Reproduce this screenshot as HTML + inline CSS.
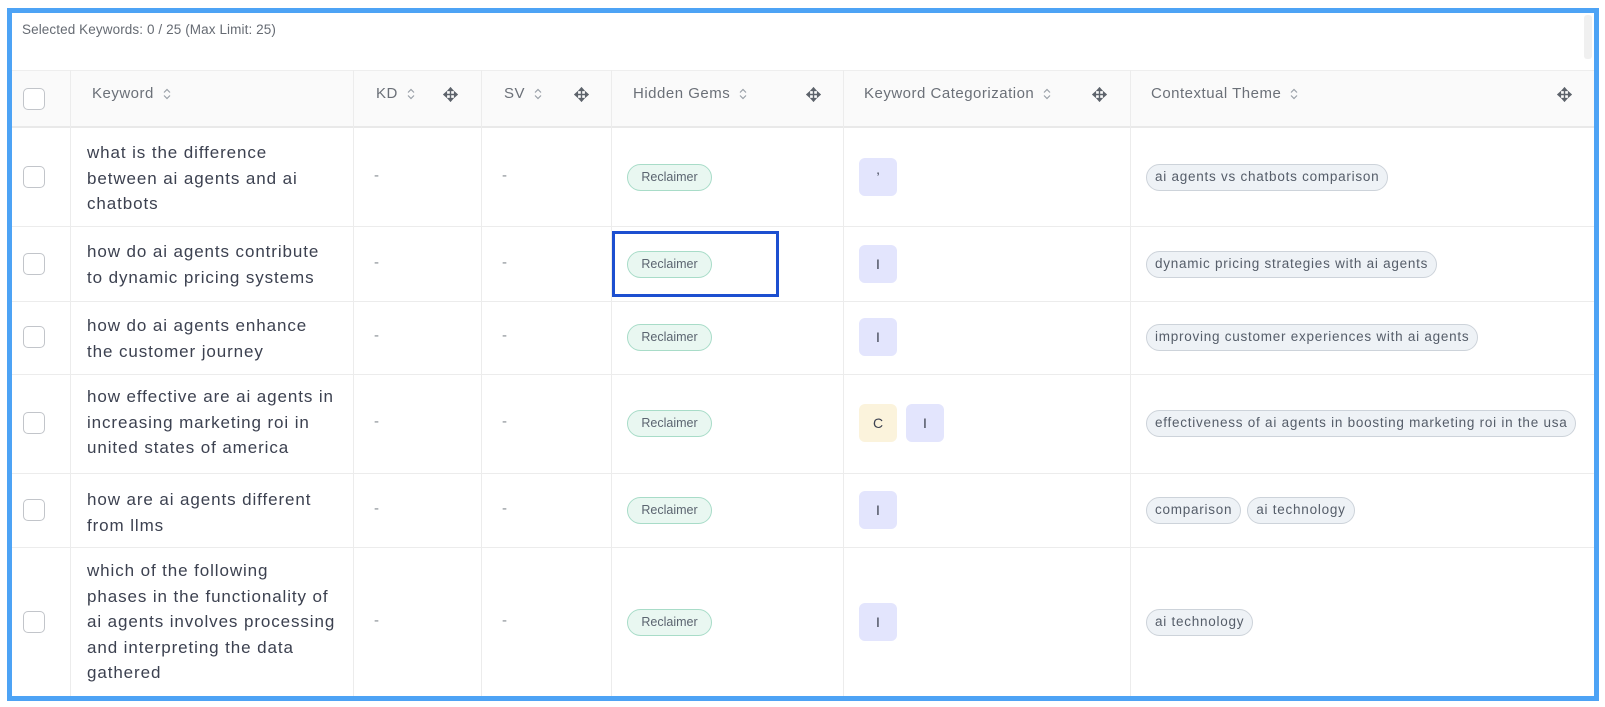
<!DOCTYPE html>
<html><head><meta charset="utf-8"><style>
*{box-sizing:border-box;margin:0;padding:0}
body{width:1605px;height:707px;background:#fff;font-family:"Liberation Sans",sans-serif;position:relative;overflow:hidden}
.frame{position:absolute;left:7px;top:8px;width:1592px;height:693px;border:5px solid #4da3f5;background:#fff;overflow:hidden}
.abs{position:absolute}
.sel{left:10px;top:9px;font-size:13.5px;color:#666b73;letter-spacing:0.1px}
.hdr{left:0;top:57px;width:1582px;height:58px;background:#fafafa;border-top:1px solid #eee;border-bottom:2px solid #e9e9e9}
.vl{position:absolute;width:1px;background:#ececec}
.hl{position:absolute;height:1px;background:#ececec;left:0;width:1582px}
.cb{position:absolute;width:22px;height:22px;border:1.5px solid #c2c5ca;border-radius:5px;background:#fff;left:11px}
.ht{position:absolute;font-size:15px;color:#6b7078;top:72px;letter-spacing:0.5px;display:flex;align-items:center}
.sort{display:inline-block;margin-left:9px;width:8px;height:12px}
.mv{position:absolute;top:74px;width:15px;height:15px}
.kw{position:absolute;left:75px;font-size:17px;line-height:25.5px;color:#3c4150;white-space:nowrap;letter-spacing:0.9px}
.dash{position:absolute;font-size:15px;color:#8a8f96}
.rec{position:absolute;left:615px;height:27px;width:85px;border:1.5px solid #a8dcc8;background:#e9f7f1;border-radius:14px;font-size:12.5px;color:#5b6470;text-align:center;line-height:24px}
.cat{position:absolute;width:38px;height:38px;border-radius:6px;background:#e3e5fd;color:#3c4150;font-size:14px;text-align:center;line-height:38px}
.cat.c{background:#fbf3dc}
.thw{position:absolute;left:1134px;display:flex;gap:6px}
.th{height:27px;border:1.5px solid #cdd3da;background:#eef2f6;border-radius:14px;font-size:13.5px;color:#555d69;padding:0 8px;line-height:24px;white-space:nowrap;letter-spacing:0.75px}
</style></head><body>
<div class="frame">
<div class="abs sel">Selected Keywords: 0 / 25 (Max Limit: 25)</div>
<div style="position:absolute;right:2px;top:2px;width:8px;height:44px;background:#f0f0f0;border-radius:3px"></div>
<div class="abs hdr"></div>
<div class="vl" style="left:58px;top:57px;height:636px"></div>
<div class="vl" style="left:341px;top:57px;height:636px"></div>
<div class="vl" style="left:469px;top:57px;height:636px"></div>
<div class="vl" style="left:599px;top:57px;height:636px"></div>
<div class="vl" style="left:831px;top:57px;height:636px"></div>
<div class="vl" style="left:1118px;top:57px;height:636px"></div>
<div class="hl" style="top:213px"></div>
<div class="hl" style="top:288px"></div>
<div class="hl" style="top:361px"></div>
<div class="hl" style="top:460px"></div>
<div class="hl" style="top:534px"></div>

<div class="cb" style="top:75px"></div>
<div class="ht" style="left:80px">Keyword<svg class="sort" viewBox="0 0 8 12"><path d="M1 4.5L4 1.5 7 4.5M1 7.5L4 10.5 7 7.5" stroke="#9aa0a8" stroke-width="1.2" fill="none"/></svg></div>
<div class="ht" style="left:364px">KD<svg class="sort" viewBox="0 0 8 12"><path d="M1 4.5L4 1.5 7 4.5M1 7.5L4 10.5 7 7.5" stroke="#9aa0a8" stroke-width="1.2" fill="none"/></svg></div>
<div class="ht" style="left:492px">SV<svg class="sort" viewBox="0 0 8 12"><path d="M1 4.5L4 1.5 7 4.5M1 7.5L4 10.5 7 7.5" stroke="#9aa0a8" stroke-width="1.2" fill="none"/></svg></div>
<div class="ht" style="left:621px">Hidden Gems<svg class="sort" viewBox="0 0 8 12"><path d="M1 4.5L4 1.5 7 4.5M1 7.5L4 10.5 7 7.5" stroke="#9aa0a8" stroke-width="1.2" fill="none"/></svg></div>
<div class="ht" style="left:852px">Keyword Categorization<svg class="sort" viewBox="0 0 8 12"><path d="M1 4.5L4 1.5 7 4.5M1 7.5L4 10.5 7 7.5" stroke="#9aa0a8" stroke-width="1.2" fill="none"/></svg></div>
<div class="ht" style="left:1139px">Contextual Theme<svg class="sort" viewBox="0 0 8 12"><path d="M1 4.5L4 1.5 7 4.5M1 7.5L4 10.5 7 7.5" stroke="#9aa0a8" stroke-width="1.2" fill="none"/></svg></div>
<svg class="mv" style="left:431px" viewBox="0 0 16 16"><path d="M8 1.5v13M1.5 8h13M8 1l-2.3 2.6h4.6zM8 15l-2.3-2.6h4.6zM1 8l2.6-2.3v4.6zM15 8l-2.6-2.3v4.6z" stroke="#5d636b" stroke-width="1.5" fill="#5d636b"/></svg>
<svg class="mv" style="left:562px" viewBox="0 0 16 16"><path d="M8 1.5v13M1.5 8h13M8 1l-2.3 2.6h4.6zM8 15l-2.3-2.6h4.6zM1 8l2.6-2.3v4.6zM15 8l-2.6-2.3v4.6z" stroke="#5d636b" stroke-width="1.5" fill="#5d636b"/></svg>
<svg class="mv" style="left:794px" viewBox="0 0 16 16"><path d="M8 1.5v13M1.5 8h13M8 1l-2.3 2.6h4.6zM8 15l-2.3-2.6h4.6zM1 8l2.6-2.3v4.6zM15 8l-2.6-2.3v4.6z" stroke="#5d636b" stroke-width="1.5" fill="#5d636b"/></svg>
<svg class="mv" style="left:1080px" viewBox="0 0 16 16"><path d="M8 1.5v13M1.5 8h13M8 1l-2.3 2.6h4.6zM8 15l-2.3-2.6h4.6zM1 8l2.6-2.3v4.6zM15 8l-2.6-2.3v4.6z" stroke="#5d636b" stroke-width="1.5" fill="#5d636b"/></svg>
<svg class="mv" style="left:1545px" viewBox="0 0 16 16"><path d="M8 1.5v13M1.5 8h13M8 1l-2.3 2.6h4.6zM8 15l-2.3-2.6h4.6zM1 8l2.6-2.3v4.6zM15 8l-2.6-2.3v4.6z" stroke="#5d636b" stroke-width="1.5" fill="#5d636b"/></svg>

<!-- row 1 -->
<div class="cb" style="top:153px"></div>
<div class="kw" style="top:127px">what is the difference<br>between ai agents and ai<br>chatbots</div>
<div class="dash" style="left:362px;top:154px">-</div><div class="dash" style="left:490px;top:154px">-</div>
<div class="rec" style="top:151px">Reclaimer</div>
<div class="cat" style="left:847px;top:145px">&#8217;</div>
<div class="thw" style="top:151px"><div class="th">ai agents vs chatbots comparison</div></div>

<!-- row 2 -->
<div class="cb" style="top:240px"></div>
<div class="kw" style="top:226px">how do ai agents contribute<br>to dynamic pricing systems</div>
<div class="dash" style="left:362px;top:241px">-</div><div class="dash" style="left:490px;top:241px">-</div>
<div class="rec" style="top:238px">Reclaimer</div>
<div style="position:absolute;left:600px;top:218px;width:167px;height:66px;border:3px solid #1c4fd0"></div>
<div class="cat" style="left:847px;top:232px">I</div>
<div class="thw" style="top:238px"><div class="th">dynamic pricing strategies with ai agents</div></div>

<!-- row 3 -->
<div class="cb" style="top:313px"></div>
<div class="kw" style="top:300px">how do ai agents enhance<br>the customer journey</div>
<div class="dash" style="left:362px;top:314px">-</div><div class="dash" style="left:490px;top:314px">-</div>
<div class="rec" style="top:311px">Reclaimer</div>
<div class="cat" style="left:847px;top:305px">I</div>
<div class="thw" style="top:311px"><div class="th">improving customer experiences with ai agents</div></div>

<!-- row 4 -->
<div class="cb" style="top:399px"></div>
<div class="kw" style="top:371px">how effective are ai agents in<br>increasing marketing roi in<br>united states of america</div>
<div class="dash" style="left:362px;top:400px">-</div><div class="dash" style="left:490px;top:400px">-</div>
<div class="rec" style="top:397px">Reclaimer</div>
<div class="cat c" style="left:847px;top:391px">C</div>
<div class="cat" style="left:894px;top:391px">I</div>
<div class="thw" style="top:397px"><div class="th">effectiveness of ai agents in boosting marketing roi in the usa</div></div>

<!-- row 5 -->
<div class="cb" style="top:486px"></div>
<div class="kw" style="top:474px">how are ai agents different<br>from llms</div>
<div class="dash" style="left:362px;top:487px">-</div><div class="dash" style="left:490px;top:487px">-</div>
<div class="rec" style="top:484px">Reclaimer</div>
<div class="cat" style="left:847px;top:478px">I</div>
<div class="thw" style="top:484px"><div class="th">comparison</div><div class="th">ai technology</div></div>

<!-- row 6 -->
<div class="cb" style="top:598px"></div>
<div class="kw" style="top:545px">which of the following<br>phases in the functionality of<br>ai agents involves processing<br>and interpreting the data<br>gathered</div>
<div class="dash" style="left:362px;top:599px">-</div><div class="dash" style="left:490px;top:599px">-</div>
<div class="rec" style="top:596px">Reclaimer</div>
<div class="cat" style="left:847px;top:590px">I</div>
<div class="thw" style="top:596px"><div class="th">ai technology</div></div>
</div>
</body></html>
